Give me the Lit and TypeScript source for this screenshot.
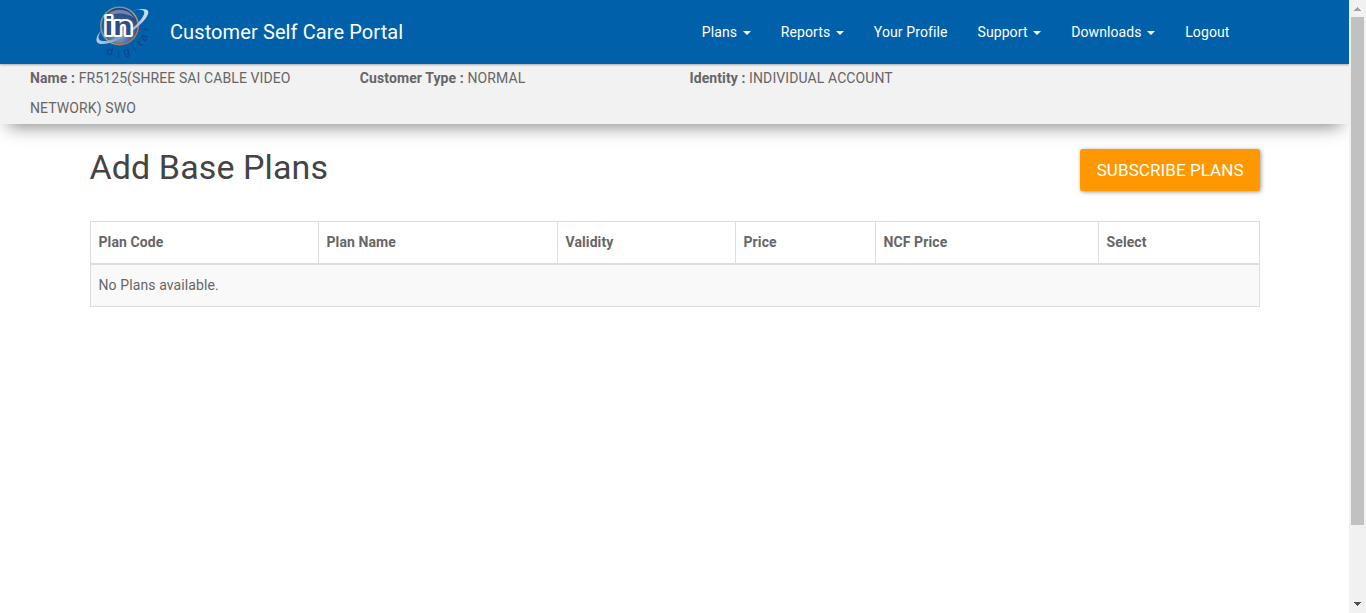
import { LitElement, html, svg, css } from "lit";
import { customElement } from "lit/decorators.js";

@customElement("brand-logo")
class BrandLogo extends LitElement {
  static styles = css`
    :host { display: block; width: 60px; height: 64px; }
    svg { display: block; overflow: visible; }
    .word { font: bold 25px "Liberation Sans", sans-serif; }
    .tag { font: 11px "Liberation Sans", sans-serif; fill: #123f86; text-anchor: middle; letter-spacing: 0; }
  `;

  render() {
    const letters = [
      ["d", 16, 51.5, 12], ["i", 25, 53.5, 0], ["g", 32.5, 51.5, -14], ["i", 40.5, 48.5, -30],
      ["t", 45.5, 43.5, -45], ["a", 49.5, 37.5, -62], ["l", 52, 29.5, -80],
    ] as const;
    return html`
      <svg width="60" height="64" viewBox="0 0 60 64" aria-label="in digital">
        <defs>
          <radialGradient id="globe" cx=".48" cy=".75" r=".7">
            <stop offset="0" stop-color="#8ea6cb" />
            <stop offset=".5" stop-color="#3f64a2" />
            <stop offset="1" stop-color="#24427c" />
          </radialGradient>
          <linearGradient id="rim" x1="0" y1="0" x2="1" y2="1">
            <stop offset="0" stop-color="#7fa65b" />
            <stop offset=".3" stop-color="#798cb0" />
            <stop offset=".55" stop-color="#a9a47b" />
            <stop offset=".8" stop-color="#c66b3c" />
            <stop offset="1" stop-color="#5c9a64" />
          </linearGradient>
          <linearGradient id="orbit" x1="0" y1="0" x2="1" y2="0">
            <stop offset="0" stop-color="#b7cbe1" />
            <stop offset=".5" stop-color="#7d97bd" />
            <stop offset="1" stop-color="#d2e0ef" />
          </linearGradient>
        </defs>
        <circle cx="25.5" cy="26" r="18.7" fill="url(#globe)" stroke="url(#rim)" stroke-width="1.6" />
        <path d="M11 18C16 7 35 7 40 18C33 12 18 12 11 18Z" fill="#a9b8d4" opacity=".55" />
        <path d="M9 29C1 36 0 44 8 44C21 45 44 29 52 18C58 9 52 7 38 11C50 8 53 11 48 18C39 31 20 42 9 41C3 41 3 35 9 29Z"
          fill="url(#orbit)" />
        <text class="word" x="10.5" y="34.5" textLength="28" lengthAdjust="spacingAndGlyphs"
          fill="#2e4d88" stroke="#fff" stroke-width="4" stroke-linejoin="round" paint-order="stroke">in</text>
        ${letters.map(([c, x, y, r]) => svg`<text class="tag" y="3.5" transform="translate(${x} ${y}) rotate(${r})">${c}</text>`)}
      </svg>`;
  }
}

@customElement("app-root")
class AppRoot extends LitElement {
  static styles = css`
    :host {
      display: flex; height: 613px; overflow: hidden; background: #fff; color: #666;
      font: 14px/30px Roboto, sans-serif; letter-spacing: .1px;
    }
    * { box-sizing: border-box; }
    .page { flex: 1; min-width: 0; overflow: hidden; }
    .navbar {
      position: relative; z-index: 2; height: 64px; padding: 0 119.5px 0 94px; display: flex;
      background: #0060aa; color: #fff; box-shadow: 0 1px 2px rgba(0, 0, 0, .3);
    }
    .brand { margin-left: 16px; font-size: 20px; line-height: 64px; letter-spacing: .1px; }
    .menu { margin-left: auto; display: flex; gap: 30px; line-height: 64px; }
    .item { display: flex; align-items: center; white-space: nowrap; }
    .caret { margin: 2px 0 0 5.6px; border: 4px solid transparent; border-top-color: #fff; border-bottom: 0; }
    .info {
      position: relative; height: 60px; padding: 0 15px; display: grid; grid-template-columns: repeat(4, 1fr);
      background: #f2f2f2; box-shadow: 0 10px 18px -8px rgba(0, 0, 0, .5);
    }
    .field { padding: 0 15px; margin-top: -1px; }
    .info b, .th { font-weight: 700; }
    .main { width: 1170px; margin-left: 90px; padding-top: 25px; }
    .head { display: flex; justify-content: space-between; height: 72px; }
    .title { margin: 0 0 0 -.5px; color: #444; font-size: 34px; font-weight: 400; line-height: 37px; letter-spacing: .1px; }
    .button {
      margin-right: -.4px; width: 180.4px; height: 42px; border: 0; border-radius: 3px; padding: 0;
      background: #ff9800; color: #fff; font: 17px/42px Roboto, sans-serif; letter-spacing: .08px;
      box-shadow: 1px 1px 4px rgba(0, 0, 0, .4);
    }
    .table { border: 1px solid #ddd; }
    .row { display: grid; grid-template-columns: 227px 239px 178px 140px 223px 161px; border-bottom: 2px solid #ddd; }
    .th { height: 41px; padding-left: 7.5px; line-height: 41px; }
    .th + .th { border-left: 1px solid #ddd; }
    .empty { height: 41px; padding-left: 7.5px; line-height: 41px; background: #f9f9f9; }
    .scroll {
      width: 17px; background: #f1f1f1; display: flex; flex-direction: column; align-items: center;
    }
    .thumb { width: 13px; height: 508px; background: #c1c1c1; }
    .arrow { display: block; width: 17px; height: 17px; }
    .down { margin-top: auto; }
  `;

  private menu: [string, boolean][] = [
    ["Plans", true], ["Reports", true], ["Your Profile", false],
    ["Support", true], ["Downloads", true], ["Logout", false],
  ];

  private columns = ["Plan Code", "Plan Name", "Validity", "Price", "NCF Price", "Select"];

  render() {
    return html`
      <div class="page">
        <nav class="navbar">
          <brand-logo></brand-logo>
          <span class="brand">Customer Self Care Portal</span>
          <div class="menu">
            ${this.menu.map(([label, drop]) => html`<span class="item">${label}${drop ? html`<i class="caret"></i>` : ""}</span>`)}
          </div>
        </nav>
        <section class="info">
          <div class="field"><b>Name :</b> FR5125(SHREE SAI CABLE VIDEO NETWORK) SWO</div>
          <div class="field"><b>Customer Type :</b> NORMAL</div>
          <div class="field"><b>Identity :</b> INDIVIDUAL ACCOUNT</div>
        </section>
        <main class="main">
          <div class="head">
            <h2 class="title">Add Base Plans</h2>
            <button class="button">SUBSCRIBE PLANS</button>
          </div>
          <div class="table">
            <div class="row">${this.columns.map((c) => html`<div class="th">${c}</div>`)}</div>
            <div class="empty">No Plans available.</div>
          </div>
        </main>
      </div>
      <div class="scroll">
        <svg class="arrow" viewBox="0 0 17 17" shape-rendering="crispEdges"><path d="M8 7h1v1h1v1h1v1h1v1H5v-1h1V9h1V8h1z" fill="#a3a3a3" /></svg>
        <div class="thumb"></div>
        <svg class="arrow down" viewBox="0 0 17 17" shape-rendering="crispEdges"><path d="M5 6h7v1h-1v1h-1v1H9v1H8V9H7V8H6V7H5z" fill="#505050" /></svg>
      </div>`;
  }
}
